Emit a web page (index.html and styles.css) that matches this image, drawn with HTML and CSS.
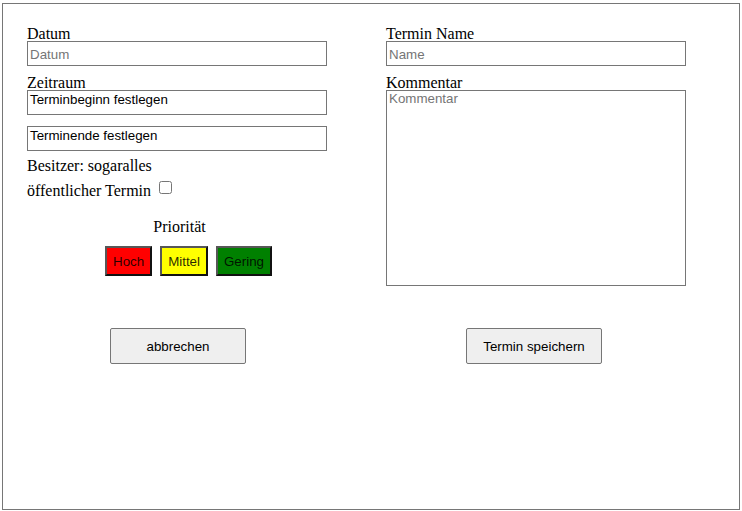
FILE: index.html
```html
<!DOCTYPE html>
<html lang="de">
<head>
<meta charset="utf-8">
<title>Termin</title>
<link rel="stylesheet" href="styles.css">
</head>
<body>
<div class="frame">
  <div class="grid">
    <div class="col col-left">
      <label class="lbl">Datum</label>
      <input class="field" type="text" placeholder="Datum">
      <label class="lbl lbl-gap">Zeitraum</label>
      <div class="box">Terminbeginn festlegen</div>
      <div class="box box-gap">Terminende festlegen</div>
      <div class="owner">Besitzer: sogaralles</div>
      <div class="public">öffentlicher Termin <input class="check" type="checkbox"></div>
      <div class="prio-title">Priorität</div>
      <div class="prio-row">
        <button class="prio prio-high">Hoch</button>
        <button class="prio prio-mid">Mittel</button>
        <button class="prio prio-low">Gering</button>
      </div>
    </div>
    <div class="col col-right">
      <label class="lbl">Termin Name</label>
      <input class="field" type="text" placeholder="Name">
      <label class="lbl lbl-gap">Kommentar</label>
      <textarea class="comment" placeholder="Kommentar"></textarea>
    </div>
    <div class="action action-left"><button class="btn">abbrechen</button></div>
    <div class="action action-right"><button class="btn">Termin speichern</button></div>
  </div>
</div>
</body>
</html>
```

FILE: styles.css
```css
html, body {
  margin: 0;
  padding: 0;
  background: #fff;
}
body {
  font-family: "Liberation Serif", "Times New Roman", serif;
  font-size: 16px;
  color: #000;
}
.frame {
  box-sizing: border-box;
  margin: 3px 0 0 2px;
  width: 738px;
  height: 507px;
  border: 1px solid #767676;
  padding: 23px 0 0 24px;
}
.grid {
  display: grid;
  grid-template-columns: 359px 300px;
  align-items: start;
}
.col {
  display: flex;
  flex-direction: column;
  align-items: flex-start;
}
.lbl {
  display: block;
  line-height: 14px;
}
.lbl-gap {
  margin-top: 10px;
}
.field,
.box,
.comment {
  box-sizing: border-box;
  width: 300px;
  margin: 0;
  border: 1px solid #767676;
  background: #fff;
  font-family: "Liberation Sans", Arial, sans-serif;
  font-size: 13.333px;
  color: #000;
}
.field {
  height: 25px;
  padding: 2px 2px 0;
  outline: none;
}
.field::placeholder,
.comment::placeholder {
  color: #757575;
}
.box {
  height: 25px;
  padding: 1px 2px 0;
  line-height: 15px;
}
.box-gap {
  margin-top: 11px;
}
.owner {
  margin-top: 6px;
  line-height: 18px;
}
.public {
  margin-top: 3px;
  line-height: 18px;
}
.check {
  width: 13px;
  height: 13px;
  margin: 3px 3px 3px 4px;
  vertical-align: 2px;
}
.prio-title {
  margin-top: 18px;
  width: 305px;
  text-align: center;
  line-height: 18px;
}
.prio-row {
  display: flex;
  gap: 8px;
  margin: 10px 0 0 78px;
}
.prio {
  box-sizing: border-box;
  height: 30px;
  padding: 0 6px;
  margin: 0;
  border-width: 2px;
  border-style: solid;
  border-color: #575757 #111 #111 #575757;
  font-family: "Liberation Sans", Arial, sans-serif;
  font-size: 13.333px;
  color: rgba(0, 0, 0, 0.85);
}
.prio-high { background: #ff0000; }
.prio-mid { background: #ffff00; }
.prio-low { background: #008000; }
.comment {
  height: 196px;
  padding: 0 2px;
  resize: none;
  outline: none;
  line-height: 15px;
}
.action {
  margin-top: 42px;
}
.action-left {
  padding-left: 83px;
}
.action-right {
  padding-left: 80px;
}
.btn {
  box-sizing: border-box;
  width: 136px;
  height: 36px;
  margin: 0;
  border: 1px solid #767676;
  border-radius: 2px;
  background: #efefef;
  font-family: "Liberation Sans", Arial, sans-serif;
  font-size: 13.333px;
  color: #000;
}
```
